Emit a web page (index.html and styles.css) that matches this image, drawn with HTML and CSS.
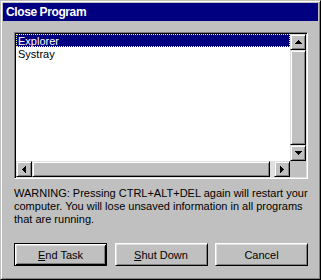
FILE: index.html
```html
<!doctype html>
<html>
<head>
    <meta charset="utf-8">
    <title>Close Program</title>
    <link rel="stylesheet" href="styles.css">
</head>
<body>
    <div class="window">
        <div class="titlebar">Close Program</div>
        <div class="content">
            <div class="listbox">
                <div class="list-main">
                    <div class="items">
                        <div class="item selected">Explorer</div>
                        <div class="item">Systray</div>
                    </div>
                    <div class="vscroll">
                        <div class="sbtn"><svg width="7" height="4"><polygon points="3.5,0 7,4 0,4"/></svg></div>
                        <div class="thumb"></div>
                        <div class="sbtn"><svg width="7" height="4"><polygon points="0,0 7,0 3.5,4"/></svg></div>
                    </div>
                </div>
                <div class="list-bottom">
                    <div class="hscroll">
                        <div class="sbtn"><svg width="4" height="7"><polygon points="0,3.5 4,0 4,7"/></svg></div>
                        <div class="thumb"></div>
                        <div class="track"></div>
                        <div class="sbtn"><svg width="4" height="7"><polygon points="0,0 4,3.5 0,7"/></svg></div>
                    </div>
                    <div class="corner"></div>
                </div>
            </div>

            <p class="warning">WARNING: Pressing CTRL+ALT+DEL again will restart your computer. You will lose unsaved information in all programs that are running.</p>

            <div class="buttons">
                <button class="btn default"><u>E</u>nd Task</button>
                <button class="btn"><u>S</u>hut Down</button>
                <button class="btn">Cancel</button>
            </div>
        </div>
    </div>
</body>
</html>
```

FILE: styles.css
```css
body {
    margin: 0;
    font-family: "Liberation Sans", Arial, sans-serif;
    font-size: 11px;
    background-color: #c0c0c0;
}
.window {
    width: 321px;
    height: 280px;
    box-sizing: border-box;
    padding: 2px;
    background-color: #c0c0c0;
    border: 1px solid;
    border-color: #c0c0c0 #000 #000 #c0c0c0;
    box-shadow: inset 1px 1px #fff, inset -1px -1px #808080;
}
.titlebar {
    height: 18px;
    background-color: #000080;
    color: #fff;
    font-weight: bold;
    font-size: 12px;
    letter-spacing: -0.4px;
    line-height: 18px;
    padding-left: 3px;
}
.content {
    padding: 11px 10px 0 11px;
}
.listbox {
    width: 294px;
    height: 147px;
    box-sizing: border-box;
    border: 1px solid;
    border-color: #808080 #fff #fff #808080;
    box-shadow: inset 1px 1px #000, inset -1px -1px #dfdfdf;
    padding: 1px;
    background-color: #fff;
    display: flex;
    flex-direction: column;
}
.list-main {
    flex: 1;
    display: flex;
}
.items {
    flex: 1;
}
.item {
    height: 13px;
    line-height: 12px;
    padding: 1px 0 0 2px;
    box-sizing: border-box;
    color: #000;
}
.selected {
    background-color: #000080;
    color: #fff;
    border: 1px dotted #ffff80;
    padding: 1px 0 0 1px;
    line-height: 10px;
}
.vscroll {
    width: 16px;
    display: flex;
    flex-direction: column;
    background-color: #c0c0c0;
}
.list-bottom {
    height: 16px;
    display: flex;
}
.hscroll {
    flex: 1;
    display: flex;
}
.corner {
    width: 16px;
    background-color: #c0c0c0;
}
.sbtn {
    width: 16px;
    height: 16px;
    box-sizing: border-box;
    background-color: #c0c0c0;
    border: 1px solid;
    border-color: #dfdfdf #000 #000 #dfdfdf;
    box-shadow: inset 1px 1px #fff, inset -1px -1px #808080;
    display: flex;
    align-items: center;
    justify-content: center;
}
.sbtn svg {
    display: block;
    shape-rendering: crispEdges;
}
.thumb {
    flex: 1;
    box-sizing: border-box;
    background-color: #c0c0c0;
    border: 1px solid;
    border-color: #dfdfdf #000 #000 #dfdfdf;
    box-shadow: inset 1px 1px #fff, inset -1px -1px #808080;
}
.track {
    width: 4px;
    background-color: #e0e0e0;
}
.warning {
    margin: 8px 0 0;
    line-height: 13px;
    color: #000;
}
.buttons {
    margin-top: 17px;
    display: flex;
    justify-content: space-between;
}
.btn {
    width: 93px;
    height: 23px;
    padding: 0;
    font-family: inherit;
    font-size: 11px;
    color: #000;
    background-color: #c0c0c0;
    border: 1px solid;
    border-color: #fff #000 #000 #fff;
    box-shadow: inset 1px 1px #dfdfdf, inset -1px -1px #808080;
}
.default {
    border-color: #000;
    box-shadow: inset 1px 1px #fff, inset -1px -1px #000, inset 2px 2px #dfdfdf, inset -2px -2px #808080;
}
```
